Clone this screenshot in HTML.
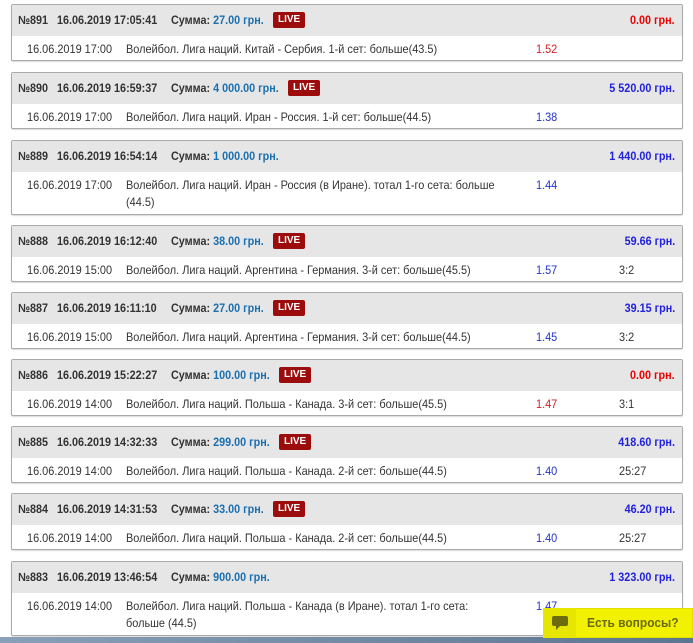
<!DOCTYPE html>
<html><head><meta charset="utf-8"><style>
*{margin:0;padding:0;box-sizing:border-box}
body{width:693px;height:643px;overflow:hidden;background:#fff;font-family:"Liberation Sans",sans-serif;font-size:12px;color:#333;position:relative}
.box{position:absolute;left:11px;width:672px;border:1px solid #aaa;border-radius:2px;background:#fff;box-shadow:0 1px 1px rgba(0,0,0,.15)}
.h{height:31px;background:#e6e6e6;position:relative;font-weight:bold;color:#333}
.h span{position:absolute;top:8px;white-space:nowrap;transform:scaleX(0.9);transform-origin:left}
.n{left:6px}.d{left:45px}.s{left:159px}.s b{color:#1a6fb0}
.live{position:absolute;top:7px;height:16px;padding:0 5px;background:#9c0c0c;color:#fff;border-radius:2px;font-size:10px;line-height:16px;font-weight:bold}
.h span.amt{right:7px;color:#2222dd;transform-origin:right}.h span.amt.red{color:#e00}
.b{position:relative;height:24px}
.b.two{height:42px}
.b span{position:absolute;top:5px;line-height:17px;transform:scaleX(0.91);transform-origin:left;white-space:nowrap}
.bd{left:15px}.b span.ev{left:114px;width:420px;white-space:normal}.od{left:524px;color:#2233cc}.od.r{color:#d0202a}.sc{left:607px}
</style></head><body>

<div class="box" style="top:4px"><div class="h"><span class="n">№891</span><span class="d">16.06.2019 17:05:41</span><span class="s">Сумма: <b>27.00 грн.</b></span><div class="live" style="left:261px">LIVE</div><span class="amt red">0.00 грн.</span></div>
<div class="b"><span class="bd">16.06.2019 17:00</span><span class="ev">Волейбол. Лига наций. Китай - Сербия. 1-й сет: больше(43.5)</span><span class="od r">1.52</span></div></div>

<div class="box" style="top:72px"><div class="h"><span class="n">№890</span><span class="d">16.06.2019 16:59:37</span><span class="s">Сумма: <b>4 000.00 грн.</b></span><div class="live" style="left:276px">LIVE</div><span class="amt">5 520.00 грн.</span></div>
<div class="b"><span class="bd">16.06.2019 17:00</span><span class="ev">Волейбол. Лига наций. Иран - Россия. 1-й сет: больше(44.5)</span><span class="od">1.38</span></div></div>

<div class="box" style="top:140px"><div class="h"><span class="n">№889</span><span class="d">16.06.2019 16:54:14</span><span class="s">Сумма: <b>1 000.00 грн.</b></span><span class="amt">1 440.00 грн.</span></div>
<div class="b two"><span class="bd">16.06.2019 17:00</span><span class="ev">Волейбол. Лига наций. Иран - Россия (в Иране). тотал 1-го сета: больше (44.5)</span><span class="od">1.44</span></div></div>

<div class="box" style="top:225px"><div class="h"><span class="n">№888</span><span class="d">16.06.2019 16:12:40</span><span class="s">Сумма: <b>38.00 грн.</b></span><div class="live" style="left:261px">LIVE</div><span class="amt">59.66 грн.</span></div>
<div class="b"><span class="bd">16.06.2019 15:00</span><span class="ev">Волейбол. Лига наций. Аргентина - Германия. 3-й сет: больше(45.5)</span><span class="od">1.57</span><span class="sc">3:2</span></div></div>

<div class="box" style="top:292px"><div class="h"><span class="n">№887</span><span class="d">16.06.2019 16:11:10</span><span class="s">Сумма: <b>27.00 грн.</b></span><div class="live" style="left:261px">LIVE</div><span class="amt">39.15 грн.</span></div>
<div class="b"><span class="bd">16.06.2019 15:00</span><span class="ev">Волейбол. Лига наций. Аргентина - Германия. 3-й сет: больше(44.5)</span><span class="od">1.45</span><span class="sc">3:2</span></div></div>

<div class="box" style="top:359px"><div class="h"><span class="n">№886</span><span class="d">16.06.2019 15:22:27</span><span class="s">Сумма: <b>100.00 грн.</b></span><div class="live" style="left:267px">LIVE</div><span class="amt red">0.00 грн.</span></div>
<div class="b"><span class="bd">16.06.2019 14:00</span><span class="ev">Волейбол. Лига наций. Польша - Канада. 3-й сет: больше(45.5)</span><span class="od r">1.47</span><span class="sc">3:1</span></div></div>

<div class="box" style="top:426px"><div class="h"><span class="n">№885</span><span class="d">16.06.2019 14:32:33</span><span class="s">Сумма: <b>299.00 грн.</b></span><div class="live" style="left:267px">LIVE</div><span class="amt">418.60 грн.</span></div>
<div class="b"><span class="bd">16.06.2019 14:00</span><span class="ev">Волейбол. Лига наций. Польша - Канада. 2-й сет: больше(44.5)</span><span class="od">1.40</span><span class="sc">25:27</span></div></div>

<div class="box" style="top:493px"><div class="h"><span class="n">№884</span><span class="d">16.06.2019 14:31:53</span><span class="s">Сумма: <b>33.00 грн.</b></span><div class="live" style="left:261px">LIVE</div><span class="amt">46.20 грн.</span></div>
<div class="b"><span class="bd">16.06.2019 14:00</span><span class="ev">Волейбол. Лига наций. Польша - Канада. 2-й сет: больше(44.5)</span><span class="od">1.40</span><span class="sc">25:27</span></div></div>

<div class="box" style="top:561px"><div class="h"><span class="n">№883</span><span class="d">16.06.2019 13:46:54</span><span class="s">Сумма: <b>900.00 грн.</b></span><span class="amt">1 323.00 грн.</span></div>
<div class="b two"><span class="bd">16.06.2019 14:00</span><span class="ev">Волейбол. Лига наций. Польша - Канада (в Иране). тотал 1-го сета: больше (44.5)</span><span class="od">1.47</span></div></div>

<div style="position:absolute;left:0;top:637px;width:693px;height:6px;background:linear-gradient(90deg,#8aa0b8,#5c7590)"></div>
<div style="position:absolute;left:543px;top:608px;width:150px;height:30px;background:#f2f200;border:1px solid #e0e000"></div>
<div style="position:absolute;left:543px;top:608px;width:33px;height:30px;background:#e6e600"></div>
<svg style="position:absolute;left:551px;top:614px" width="18" height="18" viewBox="0 0 18 18"><path d="M3 2h12a2 2 0 0 1 2 2v6a2 2 0 0 1-2 2H9l-4 4v-4H3a2 2 0 0 1-2-2V4a2 2 0 0 1 2-2z" fill="#6b6b10"/></svg>
<div style="position:absolute;left:587px;top:615px;font-weight:bold;font-size:13px;color:#6b6b10;transform:scaleX(0.92);transform-origin:left">Есть вопросы?</div>
</body></html>
